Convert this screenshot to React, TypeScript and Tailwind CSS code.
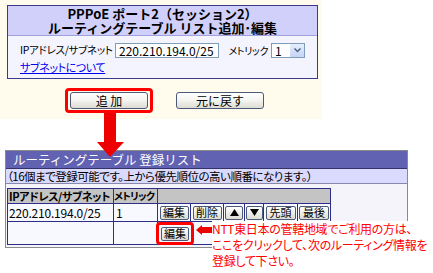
import React from "react";

const FONT = "font-['Noto_Sans_CJK_JP','Noto_Sans',sans-serif]";
const PALT = "[font-feature-settings:'palt']";

function XpButton({ label, className = "" }: { label: string; className?: string }) {
  return (
    <div
      className={`flex items-center justify-center rounded-[3px] border border-[#4a5a78] bg-gradient-to-b from-white via-[#f4f4f0] to-[#dcdcd4] text-[12px] leading-none text-black ${className}`}
    >
      {label}
    </div>
  );
}

function Tiny({ children, w }: { children: React.ReactNode; w: string }) {
  return (
    <div
      className={`flex h-[14px] items-center justify-center rounded-[2px] border border-[#4a5a78] bg-gradient-to-b from-white to-[#dcdcd4] text-[11px] leading-none text-black ${w}`}
    >
      {children}
    </div>
  );
}

function Tri({ up }: { up?: boolean }) {
  return (
    <svg width="9" height="7" viewBox="0 0 9 7">
      <polygon points={up ? "4.5,0 9,7 0,7" : "0,0 9,0 4.5,7"} fill="#000" />
    </svg>
  );
}

export default function App() {
  return (
    <div className={`relative h-[273px] w-[433px] overflow-hidden whitespace-nowrap bg-white text-black ${FONT}`}>
      {/* top: add / edit form */}
      <div className="h-[119px] w-[322px] bg-[#fffcee] pl-[7px] pt-[5px]">
        <div className="w-[311px] border border-[#3a3a8c]">
          <div className="flex h-[30px] flex-col items-center justify-center gap-px border-b border-[#a0a0dc] bg-[#d0d0fa] text-[13px] font-bold leading-[13px]">
            <div>PPPoE ポート2（セッション2）</div>
            <div>ルーティングテーブル リスト追加･編集</div>
          </div>
          <div className={`h-[42px] bg-[#f4f4ff] pl-[12px] pt-[7px] text-[12px] ${PALT}`}>
            <div className="flex h-[15px] w-[285px] items-center">
              <span className="w-[95px] text-[10.5px] leading-none tracking-[-0.3px]">IPアドレス/サブネット</span>
              <div className="flex h-[15px] w-[104px] items-center border border-[#7f9db9] bg-white pl-[3px] leading-none">
                220.210.194.0/25
              </div>
              <span className="flex-1 pr-[3px] text-right text-[10px] leading-none tracking-[-0.4px]">メトリック</span>
              <div className="flex h-[15px] w-[34px] items-center border border-[#7f9db9] bg-white">
                <span className="flex-1 pl-[3px] leading-none">1</span>
                <div className="flex h-[13px] w-[14px] items-center justify-center rounded-[1px] bg-gradient-to-b from-[#e6eefc] to-[#c4d4f4]">
                  <svg width="7" height="5" viewBox="0 0 7 5">
                    <polyline points="0.5,0.5 3.5,3.5 6.5,0.5" fill="none" stroke="#4d6185" strokeWidth="1.5" />
                  </svg>
                </div>
              </div>
            </div>
            <div className="mt-[2px] text-[11px] leading-[14px] tracking-[-0.4px]">
              <span className="text-[#0000ee] underline">サブネットについて</span>
            </div>
          </div>
        </div>
        <div className="mt-[9px] flex items-center">
          <div className="ml-[58px] flex h-[25px] w-[88px] items-center justify-center rounded-[4px] border-[3px] border-[#ff0000]">
            <XpButton label="追 加" className="h-[17px] w-[78px]" />
          </div>
          <XpButton label="元に戻す" className="ml-[23px] h-[17px] w-[88px]" />
        </div>
      </div>

      {/* bottom: registered list */}
      <div className="ml-[5px] mt-[31px] w-[403px] border border-[#8a8a8a] bg-[#f4f4fa] pb-[2px]">
        <div className="h-[18px] border-b border-[#33336a] bg-[#6262b2] pl-[7px] text-[12.5px] leading-[18px] text-white">
          ルーティングテーブル 登録リスト
        </div>
        <div className={`h-[15px] border-b border-[#8888aa] bg-[#dadaff] pl-[1px] text-[11.5px] leading-[15px] tracking-[-0.5px] ${PALT}`}>
          （16個まで登録可能です。上から優先順位の高い順番になります。）
        </div>
        <div className={`ml-[1px] mt-[4px] w-[324px] border border-[#2e2e8a] ${PALT}`}>
          <div className="flex h-[14px] bg-[#c4c4c4] text-[11px] font-bold leading-[14px] tracking-[-0.4px]">
            <div className="w-[106px] overflow-hidden border-r border-[#2e2e8a] pl-[1px]">IPアドレス/サブネット</div>
            <div className="w-[44px] border-r border-[#2e2e8a] text-[10px] tracking-[-0.6px]">メトリック</div>
            <div className="flex-1" />
          </div>
          <div className="flex h-[18px] border-t border-[#2e2e8a] bg-[#f8f8ff] text-[12px] leading-[17px]">
            <div className="w-[106px] overflow-hidden border-r border-[#2e2e8a] pl-[1px] tracking-[-0.2px]">220.210.194.0/25</div>
            <div className="w-[44px] border-r border-[#2e2e8a] pl-[2px]">1</div>
            <div className="flex w-[33px] items-center justify-center border-r border-[#2e2e8a]">
              <Tiny w="w-[29px]">編集</Tiny>
            </div>
            <div className="flex w-[33px] items-center justify-center border-r border-[#2e2e8a]">
              <Tiny w="w-[29px]">削除</Tiny>
            </div>
            <div className="flex w-[21px] items-center justify-center border-r border-[#2e2e8a]">
              <Tiny w="w-[18px]">
                <Tri up />
              </Tiny>
            </div>
            <div className="flex w-[19px] items-center justify-center border-r border-[#2e2e8a]">
              <Tiny w="w-[17px]">
                <Tri />
              </Tiny>
            </div>
            <div className="flex w-[34px] items-center justify-center border-r border-[#2e2e8a]">
              <Tiny w="w-[30px]">先頭</Tiny>
            </div>
            <div className="flex flex-1 items-center justify-center">
              <Tiny w="w-[30px]">最後</Tiny>
            </div>
          </div>
          <div className="flex h-[23px] border-t border-[#2e2e8a] bg-[#f8f8ff]">
            <div className="w-[106px] border-r border-[#2e2e8a]" />
            <div className="w-[44px] border-r border-[#2e2e8a]" />
            <div className="-ml-[2px] flex h-[23px] w-[38px] items-center justify-center rounded-[4px] border-[3px] border-[#ff0000]">
              <Tiny w="w-[28px]">編集</Tiny>
            </div>
          </div>
        </div>
      </div>

      {/* big arrow from the add button down to the list */}
      <svg className="absolute left-[96px] top-[113px]" width="29" height="45" viewBox="0 0 29 45">
        <polygon points="8,0 20,0 20,29 28,29 14,44 1,29 8,29" fill="#ee0000" />
      </svg>

      {/* note */}
      <svg className="absolute left-[196px] top-[225px]" width="16" height="10" viewBox="0 0 16 10">
        <polygon points="0,5 6,0 6,2 16,2 16,8 6,8 6,10" fill="#ee0000" />
      </svg>
      <div className={`absolute left-[212px] top-[221px] w-[221px] bg-white text-[12px] leading-[16px] tracking-[-0.3px] text-[#ff0000] ${PALT}`}>
        <div>NTT東日本の管轄地域でご利用の方は、</div>
        <div>ここをクリックして、次のルーティング情報を</div>
        <div>登録して下さい。</div>
      </div>
    </div>
  );
}
